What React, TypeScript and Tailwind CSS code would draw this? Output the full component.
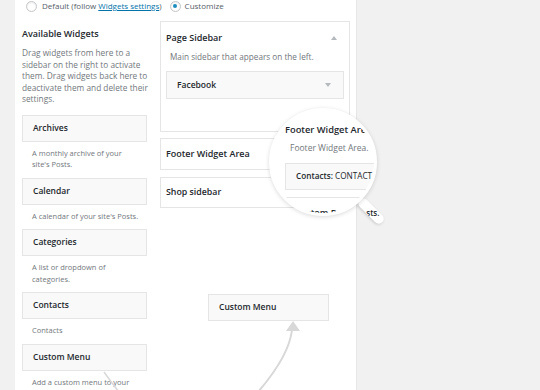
import React from 'react';

interface Widget {
    title: string;
    desc: string[];
}

const widgets: Widget[] = [
    { title: 'Archives', desc: ['A monthly archive of your', "site's Posts."] },
    { title: 'Calendar', desc: ["A calendar of your site's Posts."] },
    { title: 'Categories', desc: ['A list or dropdown of', 'categories.'] },
    { title: 'Contacts', desc: ['Contacts'] },
    { title: 'Custom Menu', desc: ['Add a custom menu to your'] },
];

const intro = [
    'Drag widgets from here to a',
    'sidebar on the right to activate',
    'them. Drag widgets back here to',
    'deactivate them and delete their',
    'settings.',
];

const Radio: React.FC<{ checked?: boolean }> = ({ checked }) => (
    <span className="w-[11px] h-[11px] rounded-full border border-[#c3c6c9] bg-white shadow-[inset_0_1px_2px_rgba(0,0,0,0.08)] flex items-center justify-center shrink-0">
        {checked && <span className="w-[4px] h-[4px] rounded-full bg-[#1e8cbe]" />}
    </span>
);

const Card: React.FC<{ children: React.ReactNode; className?: string }> = ({ children, className = '' }) => (
    <div className={`h-[27px] bg-[#f9f9f9] border border-[#e5e5e5] flex items-center text-[8.5px] font-semibold text-[#23282d] whitespace-nowrap ${className}`}>
        {children}
    </div>
);

const Caret: React.FC<{ up?: boolean }> = ({ up }) => (
    <svg width="6" height="4" viewBox="0 0 6 4" className="shrink-0">
        <path d={up ? 'M0 4 L3 0 L6 4 Z' : 'M0 0 L3 4 L6 0 Z'} fill="#b4b9be" />
    </svg>
);

export default function App() {
    return (
        <div className="relative w-[540px] h-[390px] overflow-hidden bg-[#f1f1f1] flex font-['Open_Sans',sans-serif]">
            <div className="w-[15px] shrink-0" />

            {/* main white panel */}
            <div className="w-[342px] h-full bg-white border-r border-[#e6e6e6] shrink-0 flex flex-col">
                <div className="h-[12px] pl-[11px] flex items-center text-[8px] text-[#555d66] whitespace-nowrap">
                    <Radio />
                    <span className="ml-[5px]">
                        Default (follow <span className="text-[#0073aa] underline">Widgets settings</span>)
                    </span>
                    <span className="ml-[8px]"><Radio checked /></span>
                    <span className="ml-[4px]">Customize</span>
                </div>

                <div className="mt-[9px] pl-[7px] flex gap-[13px]">
                    {/* available widgets */}
                    <div className="w-[125px] pt-[7px] shrink-0">
                        <h2 className="text-[9px] leading-[12px] font-semibold text-[#23282d] whitespace-nowrap">Available Widgets</h2>
                        <div className="mt-[7px] text-[8.3px] leading-[11.5px] text-[#72777c] whitespace-nowrap">
                            {intro.map((line) => (
                                <div key={line}>{line}</div>
                            ))}
                        </div>
                        <div className="mt-[10px] flex flex-col">
                            {widgets.map((w) => (
                                <div key={w.title}>
                                    <Card className="px-[10px]">{w.title}</Card>
                                    <div className="mt-[6px] mb-[7px] pl-[10px] text-[7.5px] leading-[11.5px] text-[#72777c] whitespace-nowrap">
                                        {w.desc.map((line) => (
                                            <div key={line}>{line}</div>
                                        ))}
                                    </div>
                                </div>
                            ))}
                        </div>
                    </div>

                    {/* sidebars */}
                    <div className="w-[190px] shrink-0 flex flex-col">
                        <div className="h-[111px] border border-[#e5e5e5] bg-white px-[5px]">
                            <div className="h-[31px] flex items-center justify-between pr-[7px]">
                                <span className="text-[9px] font-semibold text-[#23282d]">Page Sidebar</span>
                                <Caret up />
                            </div>
                            <p className="pl-[4px] text-[8.2px] leading-[8px] text-[#72777c] whitespace-nowrap">Main sidebar that appears on the left.</p>
                            <Card className="mt-[10px] pl-[10px] pr-[12px] h-[28px] justify-between">
                                <span>Facebook</span>
                                <Caret />
                            </Card>
                        </div>
                        <div className="mt-[6px] h-[32px] border border-[#e5e5e5] bg-white px-[5px] flex items-center text-[9px] font-semibold text-[#23282d]">
                            Footer Widget Area
                        </div>
                        <div className="mt-[7px] h-[31px] border border-[#e5e5e5] bg-white px-[5px] flex items-center text-[8.8px] font-semibold text-[#23282d]">
                            Shop sidebar
                        </div>
                    </div>
                </div>
            </div>

            {/* dragged widget */}
            <div className="absolute left-[208px] top-[294px] w-[121px]">
                <Card className="px-[10px]">Custom Menu</Card>
            </div>

            {/* drag arrows */}
            <svg className="absolute inset-0 pointer-events-none" width="540" height="390" viewBox="0 0 540 390">
                <path d="M258 392 Q 289 356 292 330" fill="none" stroke="#d8d8d8" strokeWidth="2" />
                <path d="M286 331 L293 321 L300 331 Z" fill="#d8d8d8" />
                <path d="M104 372 Q 111 382 119 392" fill="none" stroke="#d8d8d8" strokeWidth="1.5" />
            </svg>

            {/* magnifier */}
            <div className="absolute left-[355px] top-[206px] w-[32px] h-[10px] rotate-45 rounded-full bg-white shadow-[0_1px_3px_rgba(0,0,0,0.18)] overflow-hidden">
                <span className="absolute left-[12px] top-[-1px] -rotate-45 text-[8px] font-semibold text-[#23282d]">sts.</span>
            </div>
            <div className="absolute left-[269px] top-[108px] w-[108px] h-[108px] rounded-full border-[3px] border-white bg-white shadow-[0_1px_4px_rgba(0,0,0,0.15)] overflow-hidden">
                <div className="w-[200px] pl-[13px] pt-[13px]">
                    <div className="text-[9.3px] leading-[12px] font-semibold text-[#23282d]">Footer Widget Area</div>
                    <div className="mt-[6px] pl-[5px] text-[8.5px] leading-[12px] text-[#72777c]">Footer Widget Area.</div>
                    <div className="mt-[9px] h-[27px] bg-[#f9f9f9] border border-[#e5e5e5] flex items-center pl-[10px] text-[8.2px] text-[#23282d] whitespace-nowrap">
                        <span className="font-semibold">Contacts:</span>&nbsp;CONTACT
                    </div>
                    <div className="mt-[7px] h-[27px] border-t border-[#e5e5e5] pt-[8px] pl-[10px] text-[9px] font-semibold text-[#23282d] whitespace-nowrap">
                        Custom Recent Posts
                    </div>
                </div>
            </div>
        </div>
    );
}
